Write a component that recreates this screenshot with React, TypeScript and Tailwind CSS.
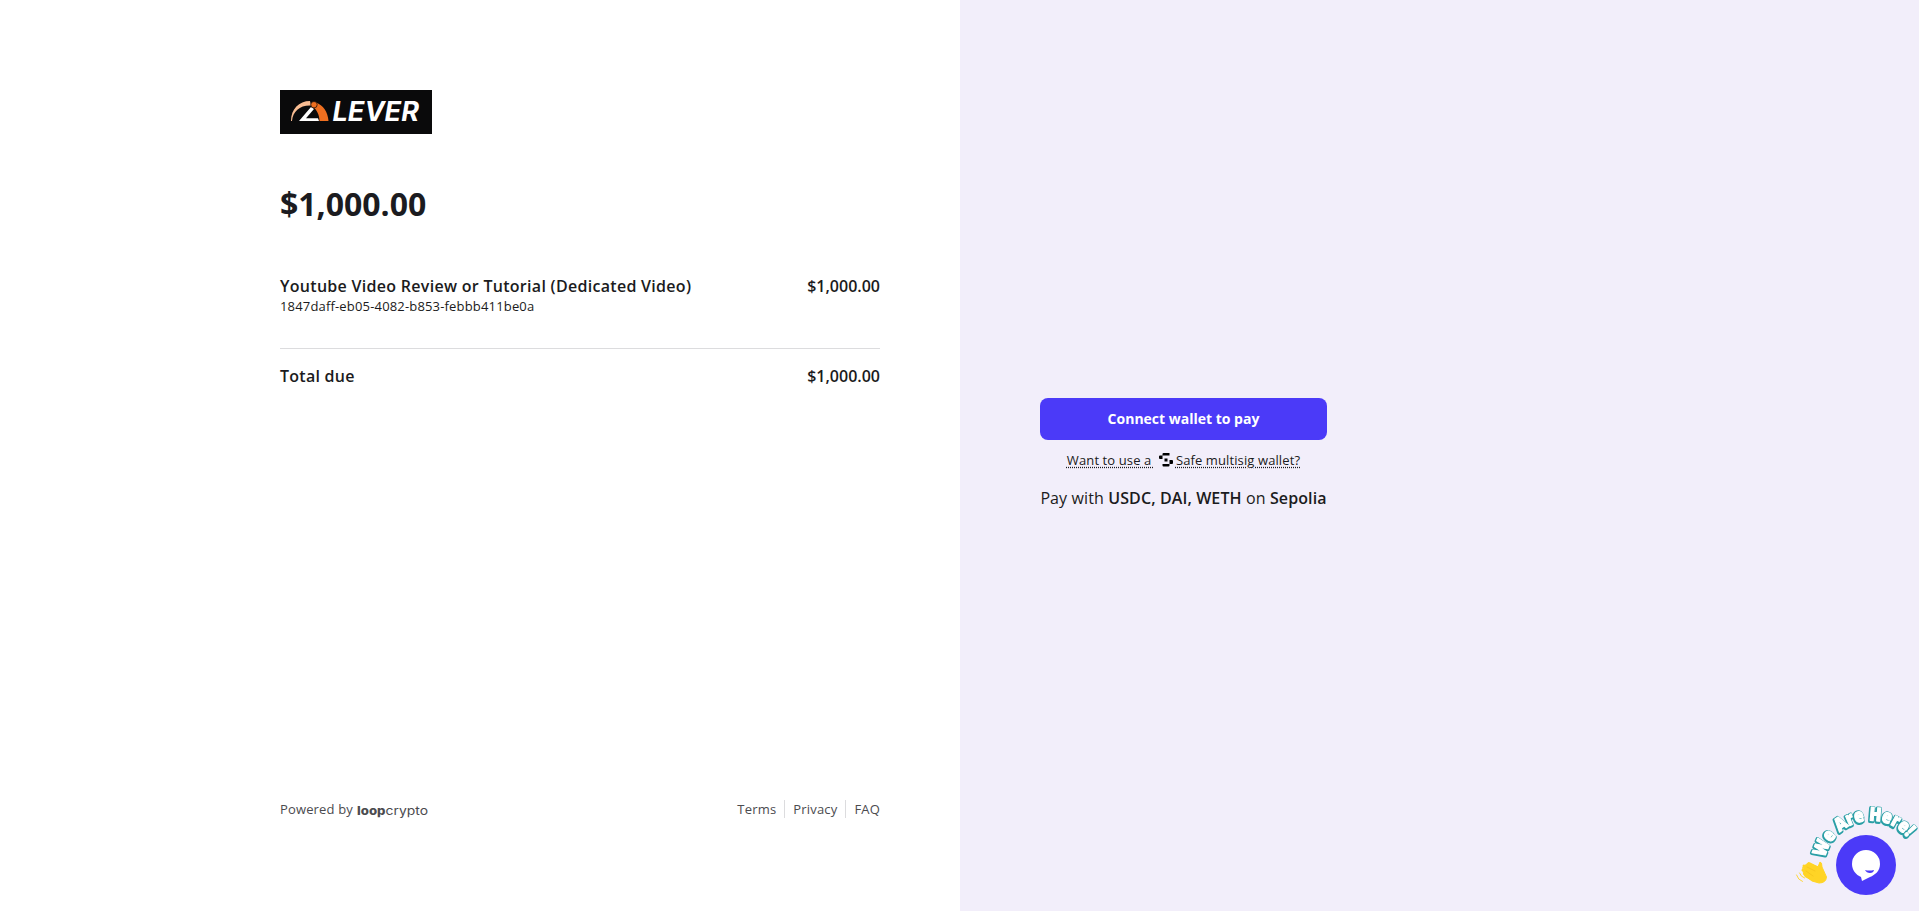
const LeverLogo = () => (
  <svg width="152" height="44" viewBox="0 0 152 44" aria-label="Lever">
    <rect width="152" height="44" fill="#0a0a0b" />
    <path d="M11 31C11 19 19 11 30 11L31 15.5C20 15 13 21 12 31Z" fill="#f9bd93" />
    <path d="M36 12.5C43 15 48 22 48.5 31H39.5C39.5 25 37 20 33 17Z" fill="#ee6f20" />
    <path d="M31 17L19 31H39L38 28.2H26L34 19Z" fill="#fff" />
    <circle cx="34" cy="14.7" r="3.2" fill="#ee6f20" stroke="#0a0a0b" strokeWidth="0.7" />
    <text
      x="52.5"
      y="31"
      textLength="86.5"
      lengthAdjust="spacingAndGlyphs"
      fill="#fff"
      className="font-['Inter'] text-[26.5px] font-bold italic"
    >
      LEVER
    </text>
  </svg>
)

const LoopCryptoLogo = () => (
  <svg width="72" height="18" viewBox="0 0 72 18" className="ml-1 overflow-visible" fill="#4b4b4f" aria-label="loopcrypto">
    <text x="0" y="15" textLength="28.5" lengthAdjust="spacingAndGlyphs" className="font-['Inter'] text-[12px] font-extrabold">
      loop
    </text>
    <text x="28.5" y="15" textLength="42.5" lengthAdjust="spacingAndGlyphs" className="font-['Inter'] text-[12px] font-normal">
      crypto
    </text>
  </svg>
)

const SafeIcon = () => (
  <svg width="14" height="14" viewBox="0 0 14 14" fill="#000">
    <path d="M3.5 1Q3.5 0 4.5 0H10.5V2.5H3.5Z M3.5 2.5V6H1Q0 6 0 5V3.5Q0 2.5 1 2.5Z M5.5 5.5H8.5V8.5H5.5Z M10.5 7H13Q14 7 14 8V10Q14 11 13 11H10.5Z M3.5 11H10.5V12.5Q10.5 13.5 9.5 13.5H4.5Q3.5 13.5 3.5 12.5Z" />
  </svg>
)

const ChatWidget = () => (
  <button className="fixed right-0 bottom-0 cursor-pointer" aria-label="Open chat">
    <svg width="140" height="120" viewBox="0 0 140 120" className="block">
      <defs>
        <path id="greeting-arc" d="M46 67A47 47 0 0 1 139 75" />
      </defs>
      <g className="font-['Open_Sans'] text-[18.5px] font-extrabold" strokeLinejoin="round">
        <text fill="#2a9fa6" stroke="#2a9fa6" strokeWidth="4" transform="translate(-0.4 0.8)">
          <textPath href="#greeting-arc" textLength="105" lengthAdjust="spacingAndGlyphs">
            We Are Here!
          </textPath>
        </text>
        <text fill="#fff" stroke="#fff" strokeWidth="1.2">
          <textPath href="#greeting-arc" textLength="105" lengthAdjust="spacingAndGlyphs">
            We Are Here!
          </textPath>
        </text>
      </g>
      <g fill="#ffd426" stroke="#ffd426" strokeLinecap="round" strokeLinejoin="round">
        <path d="M24 76L29 72L39 76L41 71Q43 71 43 76L47.5 86Q47 92 40 92L33 90L25 84Z" />
        <path d="M30 72.5L39 77M25 75L37 81M24 79L35 86M27 85L35 89" strokeWidth="3" />
        <path d="M20.5 82Q22 86 25.5 87M17.5 84Q19 89 23.5 90.5" fill="none" strokeWidth="0.9" />
        <path d="M28 76L36 80M27 80L34 85" fill="none" stroke="#f1bd18" strokeWidth="0.6" />
      </g>
      <circle cx="87" cy="74" r="30" fill="#4b3af8" />
      <path d="M87 59A14 14 0 0 1 101 73C101 80 96 84 91 86L83 90L82 86C77 84 73 79 73 73A14 14 0 0 1 87 59Z" fill="#fff" />
      <path d="M86 79Q90 80.2 95 79Q94.5 82 91 82Q87.5 82 86 79Z" fill="#4b3af8" />
    </svg>
  </button>
)

const footerLinks = ["Terms", "Privacy", "FAQ"]

const App = () => {
  return (
    <div className="flex h-screen overflow-hidden bg-white font-['Open_Sans',sans-serif] text-[#1b1b20]">
      <main className="flex w-[960px] shrink-0 flex-col pt-[90px] pr-20 pb-[93px] pl-[280px]">
        <LeverLogo />
        <h1 className="mt-12 text-[32px] leading-[44px] font-bold">$1,000.00</h1>

        {/* Line items */}
        <div className="mt-12 flex items-start justify-between border-b border-[#dcdcde] pb-[33px]">
          <div>
            <div className="text-base leading-6 font-semibold tracking-[0.29px]">
              Youtube Video Review or Tutorial (Dedicated Video)
            </div>
            <div className="-mt-px text-[13px] leading-[18px] tracking-[0.17px]">1847daff-eb05-4082-b853-febbb411be0a</div>
          </div>
          <div className="text-base leading-6 font-semibold">$1,000.00</div>
        </div>
        <div className="mt-[15px] flex justify-between text-base leading-6 font-semibold">
          <span className="tracking-[0.25px]">Total due</span>
          <span>$1,000.00</span>
        </div>

        <footer className="mt-auto flex items-center justify-between text-[13px] leading-[18px] text-[#4b4b4f]">
          <div className="flex items-center">
            <span className="tracking-[0.15px]">Powered by</span>
            <LoopCryptoLogo />
          </div>
          <nav className="flex tracking-[0.18px]">
            {footerLinks.map((link) => (
              <a key={link} href="#" className="border-l border-[#dcdcde] px-2 first:border-l-0 last:pr-0">
                {link}
              </a>
            ))}
          </nav>
        </footer>
      </main>

      <aside className="flex flex-1 items-center bg-[#f2eefa] pb-[3px] pl-20">
        <div className="flex w-[287px] flex-col items-center">
          <button className="h-[42px] w-full cursor-pointer rounded-lg bg-[#4b3af8] text-sm font-bold text-white">
            Connect wallet to pay
          </button>
          <a href="#" className="mt-[11px] flex h-[18px] items-center text-[13px] leading-[18px] tracking-[0.11px]">
            <span className="whitespace-pre underline decoration-dotted underline-offset-2">Want to use a </span>
            <span className="mr-[3px] ml-1">
              <SafeIcon />
            </span>
            <span className="underline decoration-dotted underline-offset-2">Safe multisig wallet?</span>
          </a>
          <p className="mt-[17px] text-base leading-6 tracking-[0.11px] whitespace-nowrap">
            Pay with <b className="font-semibold">USDC, DAI, WETH</b> on <b className="font-semibold">Sepolia</b>
          </p>
        </div>
      </aside>

      <ChatWidget />
    </div>
  )
}

export default App
